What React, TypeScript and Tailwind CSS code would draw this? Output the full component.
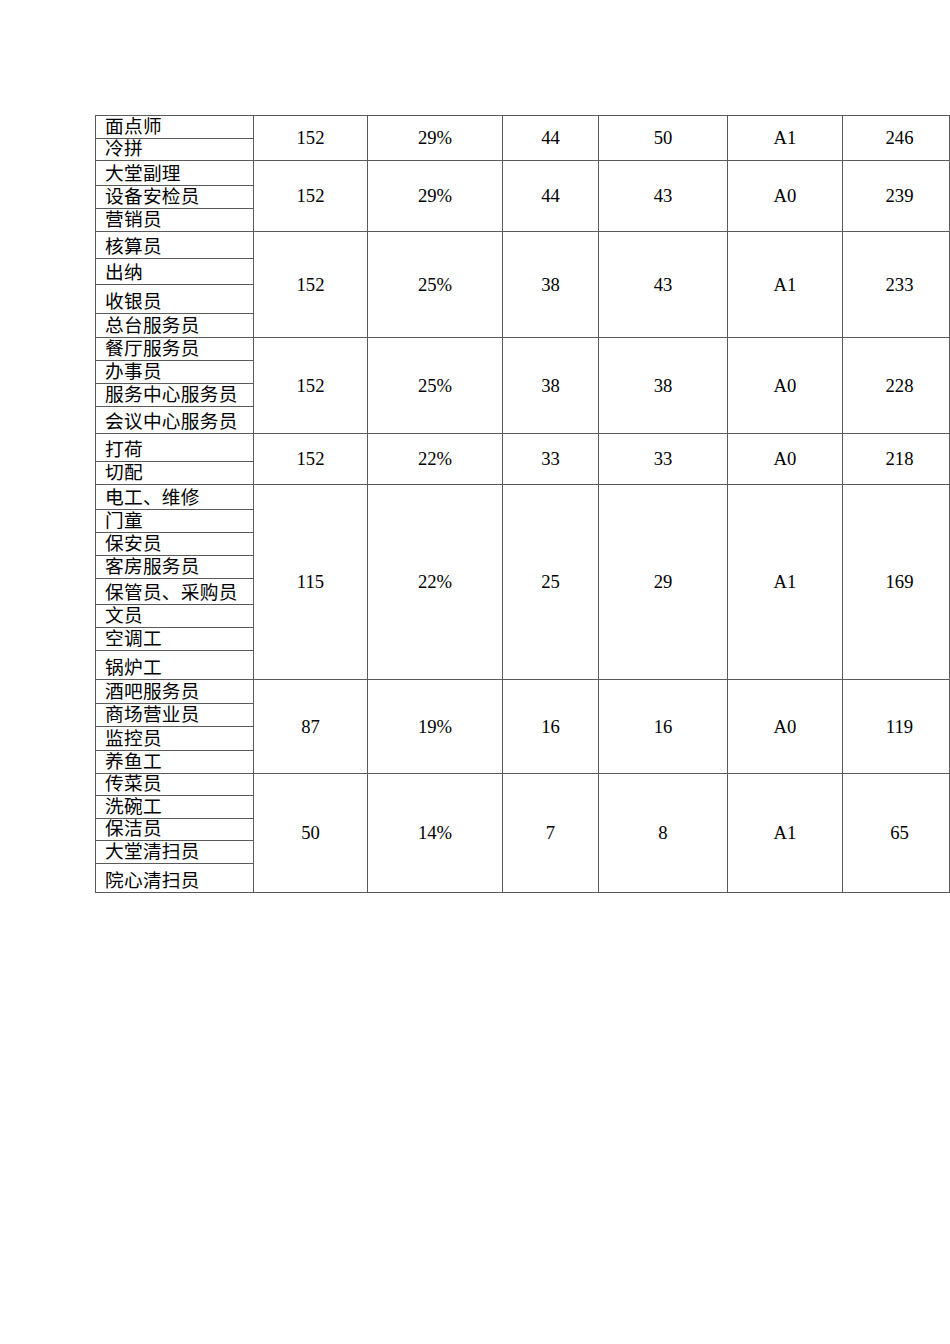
const GROUPS = [
  { rows: [['面点师', 23], ['冷拼', 22]], vals: ['152', '29%', '44', '50', 'A1', '246'] },
  { rows: [['大堂副理', 25], ['设备安检员', 23], ['营销员', 23]], vals: ['152', '29%', '44', '43', 'A0', '239'] },
  { rows: [['核算员', 27], ['出纳', 26], ['收银员', 29], ['总台服务员', 24]], vals: ['152', '25%', '38', '43', 'A1', '233'] },
  { rows: [['餐厅服务员', 23], ['办事员', 23], ['服务中心服务员', 23], ['会议中心服务员', 27]], vals: ['152', '25%', '38', '38', 'A0', '228'] },
  { rows: [['打荷', 28], ['切配', 23]], vals: ['152', '22%', '33', '33', 'A0', '218'] },
  {
    rows: [
      ['电工、维修', 25], ['门童', 23], ['保安员', 23], ['客房服务员', 23],
      ['保管员、采购员', 26], ['文员', 23], ['空调工', 23], ['锅炉工', 29],
    ],
    vals: ['115', '22%', '25', '29', 'A1', '169'],
  },
  { rows: [['酒吧服务员', 24], ['商场营业员', 23], ['监控员', 24], ['养鱼工', 23]], vals: ['87', '19%', '16', '16', 'A0', '119'] },
  {
    rows: [['传菜员', 22], ['洗碗工', 23], ['保洁员', 22], ['大堂清扫员', 23], ['院心清扫员', 29]],
    vals: ['50', '14%', '7', '8', 'A1', '65'],
  },
] as const

// widths of the six number columns; the last one is nudged like the source
const COLS = ['w-[114px]', 'w-[135px]', 'w-[96px]', 'w-[129px]', 'w-[115px]', 'w-[107px] pl-[7px]']

export default function App() {
  return (
    <div
      className="min-h-[1344px] w-[950px] bg-white pt-[115px] text-[18.67px] text-black"
      style={{ fontFamily: '"Liberation Serif", "Noto Sans CJK SC", serif' }}
    >
      <div className="ml-[95px] w-[855px] border-l border-t border-[#5a5a5a]">
        {GROUPS.map((g, gi) => (
          <div key={gi} className="flex">
            <div className="w-[158px] shrink-0 border-r border-[#5a5a5a]">
              {g.rows.map(([name, h], ri) => (
                <div
                  key={ri}
                  className="box-border flex items-end border-b border-[#5a5a5a] pl-[9px] leading-[20px] whitespace-nowrap tracking-[0.3px]"
                  style={{ height: h }}
                >
                  <span className="mb-[1px]">{name}</span>
                </div>
              ))}
            </div>
            {g.vals.map((v, vi) => (
              <div
                key={vi}
                className={`${COLS[vi]} box-border flex shrink-0 items-center justify-center border-b border-r border-[#5a5a5a]`}
              >
                {v}
              </div>
            ))}
          </div>
        ))}
      </div>
    </div>
  )
}
